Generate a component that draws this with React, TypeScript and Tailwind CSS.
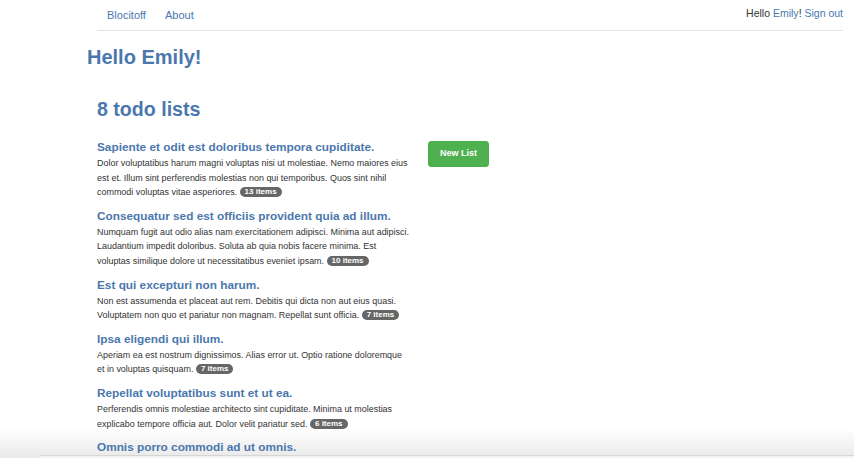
import React from 'react';

const lists = [
  {
    title: 'Sapiente et odit est doloribus tempora cupiditate.',
    body: 'Dolor voluptatibus harum magni voluptas nisi ut molestiae. Nemo maiores eius est et. Illum sint perferendis molestias non qui temporibus. Quos sint nihil commodi voluptas vitae asperiores.',
    count: 13,
  },
  {
    title: 'Consequatur sed est officiis provident quia ad illum.',
    body: 'Numquam fugit aut odio alias nam exercitationem adipisci. Minima aut adipisci. Laudantium impedit doloribus. Soluta ab quia nobis facere minima. Est voluptas similique dolore ut necessitatibus eveniet ipsam.',
    count: 10,
  },
  {
    title: 'Est qui excepturi non harum.',
    body: 'Non est assumenda et placeat aut rem. Debitis qui dicta non aut eius quasi. Voluptatem non quo et pariatur non magnam. Repellat sunt officia.',
    count: 7,
  },
  {
    title: 'Ipsa eligendi qui illum.',
    body: 'Aperiam ea est nostrum dignissimos. Alias error ut. Optio ratione doloremque et in voluptas quisquam.',
    count: 7,
  },
  {
    title: 'Repellat voluptatibus sunt et ut ea.',
    body: 'Perferendis omnis molestiae architecto sint cupiditate. Minima ut molestias explicabo tempore officia aut. Dolor velit pariatur sed.',
    count: 6,
  },
  {
    title: 'Omnis porro commodi ad ut omnis.',
    body: 'Quia et nostrum voluptas. Sit tenetur ut voluptatem.',
    count: 5,
  },
];

const App: React.FC = () => {
  return (
    <div className="relative h-[458px] w-[854px] overflow-hidden bg-white font-['Liberation_Sans',Arial,sans-serif] text-[#333]">
      {/* window shadow at bottom, behind the page text */}
      <div className="absolute bottom-0 left-0 right-0 h-[30px] bg-gradient-to-b from-white/0 to-[#e9e9e9]" />
      <div className="absolute bottom-[2px] left-[40px] right-0 h-[1px] bg-[#d6d6d6]" />
      <div className="absolute bottom-0 left-[40px] right-0 h-[2px] bg-[#f4f4f4]" />

      <div className="relative">
        {/* nav */}
        <div className="ml-[97px] mr-[11px] flex h-[31px] items-center justify-between border-b border-[#e5e5e5] text-[10.5px]">
          <div className="flex gap-[19px] pl-[10px] text-[11px] text-[#4a77ad]">
            <a>Blocitoff</a>
            <a>About</a>
          </div>
          <div className="-mt-[2px]">
            Hello <a className="text-[#4a77ad]">Emily</a>! <a className="text-[#4a77ad]">Sign out</a>
          </div>
        </div>

        <h1 className="ml-[87px] mt-[13px] text-[20px] font-bold leading-[26px] text-[#4a77ad]">Hello Emily!</h1>

        <div className="ml-[97px] mt-[27px]">
          <h2 className="text-[19.6px] font-bold leading-[24px] text-[#4a77ad]">8 todo lists</h2>

          <div className="mt-[18px] flex gap-[19px]">
            <div className="flex w-[312px] flex-col gap-[8px]">
              {lists.map((l) => (
                <div key={l.title}>
                  <h3 className="text-[11.8px] font-bold leading-[16px] text-[#4a77ad]">{l.title}</h3>
                  <p className="mt-[1px] text-[8.95px] leading-[14.6px] text-[#333]">
                    {l.body}{' '}
                    <span className="inline-block rounded-full bg-[#666] px-[5px] align-[1px] text-[8px] font-bold leading-[10px] text-white">
                      {l.count} items
                    </span>
                  </p>
                </div>
              ))}
            </div>
            <div>
              <button className="-mt-[1px] h-[26px] w-[61px] rounded-[3px] border border-[#4cae4c] bg-[#4fb04f] text-[9px] font-bold text-white">
                New List
              </button>
            </div>
          </div>
        </div>
      </div>
    </div>
  );
};

export default App;
